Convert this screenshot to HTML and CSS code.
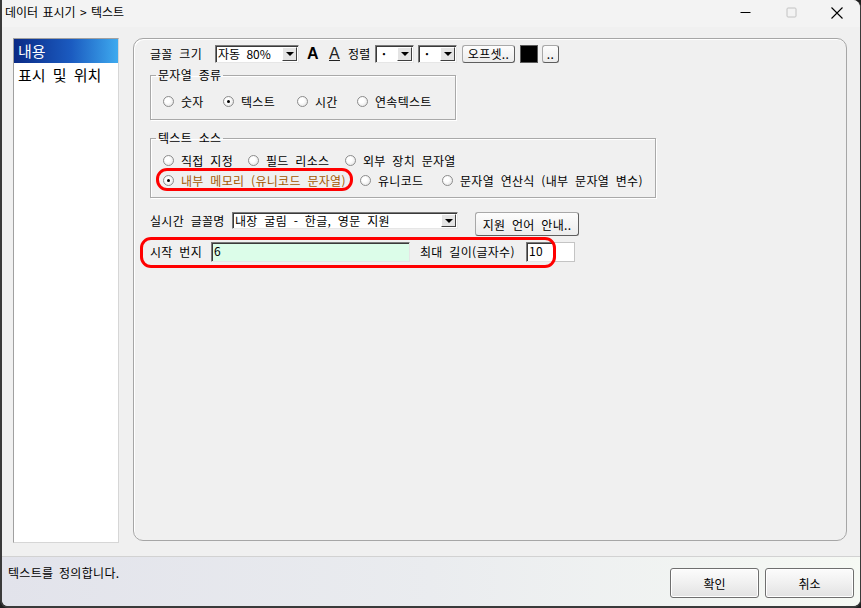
FILE: index.html
```html
<!DOCTYPE html>
<html lang="ko">
<head>
  <meta charset="UTF-8">
  <title>데이터 표시기 &gt; 텍스트</title>
  <link rel="stylesheet" href="styles.css">
</head>
<body>
  <div class="window">
    <div class="titlebar">
      <span class="title">데이터 표시기 &gt; 텍스트</span>
      <div class="caption-btns">
        <span class="cap"><svg width="11" height="11" viewBox="0 0 11 11"><path d="M0.5 5.5H10.5" stroke="#000" stroke-width="1"/></svg></span>
        <span class="cap"><svg width="11" height="11" viewBox="0 0 11 11"><rect x="1" y="1" width="9" height="9" rx="1" fill="none" stroke="#c2c2c2" stroke-width="1"/></svg></span>
        <span class="cap"><svg width="12" height="12" viewBox="0 0 12 12"><path d="M0.5 0.5L11.5 11.5M11.5 0.5L0.5 11.5" stroke="#000" stroke-width="1.1"/></svg></span>
      </div>
    </div>

    <div class="content">
      <ul class="tree">
        <li class="sel">내용</li>
        <li>표시 및 위치</li>
      </ul>

      <div class="panel">
        <!-- 글꼴 크기 / 정렬 -->
        <div class="row row-font">
          <span class="lbl w-size">글꼴 크기</span>
          <div class="combo combo-size">
            <span class="combo-text">자동 80%</span>
            <span class="combo-btn"></span>
          </div>
          <span class="glyph-a bold">A</span>
          <span class="glyph-a under">A</span>
          <span class="lbl w-align">정렬</span>
          <div class="combo combo-align">
            <span class="combo-text dot">·</span>
            <span class="combo-btn"></span>
          </div>
          <div class="combo combo-align combo-gap">
            <span class="combo-text dot">·</span>
            <span class="combo-btn"></span>
          </div>
          <button class="btn btn-offset">오프셋..</button>
          <span class="swatch"></span>
          <button class="btn btn-dots">..</button>
        </div>

        <!-- 문자열 종류 -->
        <fieldset class="group group-kind">
          <legend>문자열 종류</legend>
          <div class="opts">
            <label class="opt w60"><span class="rb"></span>숫자</label>
            <label class="opt w74"><span class="rb on"></span>텍스트</label>
            <label class="opt w60"><span class="rb"></span>시간</label>
            <label class="opt"><span class="rb"></span>연속텍스트</label>
          </div>
        </fieldset>

        <!-- 텍스트 소스 -->
        <fieldset class="group group-src">
          <legend>텍스트 소스</legend>
          <div class="opts">
            <label class="opt w85"><span class="rb"></span>직접 지정</label>
            <label class="opt w97"><span class="rb"></span>필드 리소스</label>
            <label class="opt"><span class="rb"></span>외부 장치 문자열</label>
          </div>
          <div class="opts opts-2">
            <label class="opt w183 hl-opt picked"><span class="rb on"></span>내부 메모리 (유니코드 문자열)</label>
            <label class="opt w82"><span class="rb"></span>유니코드</label>
            <label class="opt"><span class="rb"></span>문자열 연산식 (내부 문자열 변수)</label>
          </div>
        </fieldset>

        <!-- 실시간 글꼴명 -->
        <div class="row row-fontname">
          <span class="lbl w-fontname">실시간 글꼴명</span>
          <div class="combo combo-font">
            <span class="combo-text">내장 굴림 - 한글, 영문 지원</span>
            <span class="combo-btn"></span>
          </div>
          <button class="btn btn-lang">지원 언어 안내..</button>
        </div>

        <!-- 시작 번지 / 최대 길이 -->
        <div class="row row-start">
          <div class="hl-row">
            <span class="lbl w-start">시작 번지</span>
            <span class="field field-start">6</span>
            <span class="lbl w-len">최대 길이(글자수)</span>
            <span class="field field-len">10</span>
          </div>
          <span class="len-tail"></span>
        </div>
      </div>
    </div>

    <div class="footer">
      <span class="status">텍스트를 정의합니다.</span>
      <div class="dlg-btns">
        <button class="btn-dlg">확인</button>
        <button class="btn-dlg">취소</button>
      </div>
    </div>
  </div>
</body>
</html>
```

FILE: styles.css
```css
body {
  margin: 0;
  background-color: #1f1f1f;
  font-family: "Noto Sans CJK KR", "Noto Sans", sans-serif;
  font-size: 12px;
  color: #000;
}
.window {
  width: 861px;
  height: 608px;
  box-sizing: border-box;
  border: 1px solid #3a3a3a;
  border-left-width: 2px;
  border-bottom-width: 2px;
  border-top: none;
  border-radius: 0 8px 8px 8px;
  background-color: #f0f0f0;
  display: flex;
  flex-direction: column;
  overflow: hidden;
}
.titlebar {
  height: 27px;
  flex: none;
  display: flex;
  background-color: #f3f3f3;
}
.title {
  padding: 4px 0 0 3px;
  line-height: 16px;
  word-spacing: 1px;
}
.caption-btns {
  margin-left: auto;
  display: flex;
}
.cap {
  width: 46px;
  display: flex;
  align-items: center;
  justify-content: center;
  padding-bottom: 2px;
}
.content {
  height: 529px;
  flex: none;
  box-sizing: border-box;
  display: flex;
  padding: 11px 0 0 11px;
}
.tree {
  width: 106px;
  height: 505px;
  box-sizing: border-box;
  margin: 0;
  padding: 0;
  list-style: none;
  background-color: #fff;
  border: 1px solid #a0a0a0;
  border-right-color: #d6d6d6;
  border-bottom-color: #d6d6d6;
  font-size: 15px;
  word-spacing: 3px;
}
.tree li {
  height: 26px;
  line-height: 24px;
  padding-left: 4px;
}
.tree li.sel {
  height: 24px;
  color: #fff;
  background: linear-gradient(to right, #0a2a86, #1b5bc0 55%, #3eaaef);
}
.panel {
  margin-left: 14px;
  width: 714px;
  height: 503px;
  box-sizing: border-box;
  border: 1px solid #a6a6a6;
  border-radius: 10px;
  box-shadow: inset 1px 1px 0 #fff;
  padding: 6px 0 0 16px;
  letter-spacing: 0.3px;
  word-spacing: 3px;
}
.row {
  display: flex;
  align-items: center;
}
.lbl {
  display: inline-block;
  line-height: 16px;
  white-space: nowrap;
}
.row-font {
  height: 18px;
}
.w-size { width: 65px; }
.w-align { width: 27px; margin-left: 8px; }
.w-fontname { width: 82px; }
.w-start { width: 61px; }
.w-len { width: 106px; margin-left: 10px; }

/* combo box */
.combo {
  display: flex;
  height: 18px;
  box-sizing: border-box;
  background-color: #fff;
  border: 1px solid;
  border-color: #7a7a7a #e6e6e6 #e6e6e6 #7a7a7a;
  box-shadow: inset 1px 1px 0 #3a3a3a;
  padding: 1px 1px 1px 2px;
}
.combo-text {
  flex: 1;
  line-height: 14px;
  white-space: nowrap;
  letter-spacing: 0;
}
.combo-text.dot {
  padding-left: 4px;
  font-weight: bold;
}
.combo-btn {
  width: 15px;
  flex: none;
  box-sizing: border-box;
  background-color: #e4e4e4;
  border: 1px solid;
  border-color: #fff #404040 #404040 #fff;
  display: flex;
  align-items: center;
  justify-content: center;
}
.combo-btn::after {
  content: '';
  border-left: 4px solid transparent;
  border-right: 4px solid transparent;
  border-top: 4px solid #000;
}
.combo-size { width: 84px; }
.combo-align { width: 39px; margin-left: 0; }
.combo-gap { margin-left: 4px; }
.combo-font {
  width: 226px;
  height: 17px;
}
.combo-font .combo-text {
  letter-spacing: 0.3px;
}

.glyph-a {
  font-family: "Liberation Sans", Arial, sans-serif;
  font-size: 16px;
  line-height: 18px;
  width: 11px;
}
.glyph-a.bold {
  font-weight: bold;
  margin-left: 8px;
}
.glyph-a.under {
  text-decoration: underline;
  text-underline-offset: 1px;
  margin-left: 11px;
  color: #222;
}

/* push buttons */
.btn {
  font-family: inherit;
  font-size: 12px;
  color: #000;
  padding: 0;
  box-sizing: border-box;
  border: 1px solid;
  border-color: #a8a8a8 #5e5e5e #5e5e5e #a8a8a8;
  border-radius: 3px;
  background: linear-gradient(#fdfdfd, #ececec);
  letter-spacing: 0.3px;
  word-spacing: 3px;
}
.btn-offset {
  width: 53px;
  height: 18px;
  line-height: 14px;
  margin-left: 5px;
}
.btn-dots {
  width: 17px;
  height: 18px;
  line-height: 14px;
  margin-left: 4px;
}
.btn-lang {
  width: 104px;
  height: 24px;
  margin-left: 17px;
}
.swatch {
  width: 18px;
  height: 18px;
  box-sizing: border-box;
  margin-left: 5px;
  background-color: #000;
  border: 1px solid #5a5a5a;
}

/* group boxes */
.group {
  margin: 5px 0 0;
  box-sizing: border-box;
  border: 1px solid #a9a9a9;
  box-shadow: inset 1px 1px 0 #fff, 1px 1px 0 #fff;
  min-width: 0;
}
.group legend {
  padding: 0 2px;
  margin-left: -7px;
  line-height: 14px;
}
.group-kind {
  width: 306px;
  padding: 11px 0 10px 12px;
}
.group-src {
  width: 506px;
  margin-top: 11px;
  padding: 7px 0 9px 12px;
}
.opts {
  display: flex;
  height: 16px;
}
.opts-2 {
  margin-top: 4px;
}
.opt {
  display: inline-flex;
  align-items: center;
  height: 16px;
  white-space: nowrap;
  flex: none;
}
.w60 { width: 60px; }
.w74 { width: 74px; }
.w82 { width: 82px; }
.w85 { width: 85px; }
.w97 { width: 97px; }
.w183 { width: 183px; margin-right: 14px; }
.picked {
  color: #a35800;
}
.rb {
  width: 11px;
  height: 11px;
  flex: none;
  box-sizing: border-box;
  border-radius: 50%;
  border: 1px solid #8d8d8d;
  background: radial-gradient(circle at 40% 40%, #fff 30%, #dcdcdc);
  margin-right: 7px;
  position: relative;
}
.rb.on::after {
  content: '';
  position: absolute;
  left: 3px;
  top: 3px;
  width: 3px;
  height: 3px;
  border-radius: 50%;
  background-color: #000;
}

/* red annotation marks */
.hl-opt,
.hl-row {
  position: relative;
}
.hl-opt::after,
.hl-row::after {
  content: '';
  position: absolute;
  border: 3px solid #f00;
  border-radius: 11px;
  pointer-events: none;
}
.hl-opt::after {
  left: -7px;
  right: -7px;
  top: -4px;
  bottom: -3px;
}
.hl-row {
  display: flex;
  align-items: center;
}
.hl-row::after {
  left: -10px;
  right: -1px;
  top: -5px;
  bottom: -6px;
}

.row-fontname {
  margin-top: 14px;
  align-items: flex-start;
}
.row-fontname .lbl {
  line-height: 17px;
}
.row-start {
  margin-top: 6px;
  height: 20px;
}

/* edit fields */
.field {
  display: inline-block;
  height: 20px;
  box-sizing: border-box;
  border: 1px solid;
  border-color: #7a7a7a #e6e6e6 #e6e6e6 #7a7a7a;
  box-shadow: inset 1px 1px 0 #3a3a3a;
  padding: 0 0 0 2px;
  line-height: 16px;
}
.field-start {
  width: 199px;
  background-color: #dcfde9;
}
.field-len {
  width: 29px;
  background-color: #fff;
}
.len-tail {
  width: 20px;
  height: 20px;
  box-sizing: border-box;
  background-color: #fff;
  border: 1px solid #c4c4c4;
  border-left: none;
}

/* bottom bar */
.footer {
  flex: 1;
  display: flex;
  align-items: flex-start;
  border-top: 1px solid #d2d2d2;
  background: linear-gradient(to right, #e2e3eb, #eaecef 50%, #f6f9f4);
  padding: 0 6px 0 6px;
}
.status {
  margin-top: 8px;
  line-height: 16px;
  letter-spacing: 0.3px;
  word-spacing: 2px;
}
.dlg-btns {
  margin-left: auto;
  margin-top: 11px;
  display: flex;
}
.btn-dlg {
  width: 89px;
  height: 30px;
  margin-left: 6px;
  padding: 0;
  font-family: inherit;
  font-size: 12px;
  color: #000;
  box-sizing: border-box;
  border: 1px solid #6f6f6f;
  border-radius: 3px;
  background: linear-gradient(#fcfcfc, #f0f0f0 50%, #e2e2e2);
  box-shadow: inset 0 0 0 1px #fff;
}
```
